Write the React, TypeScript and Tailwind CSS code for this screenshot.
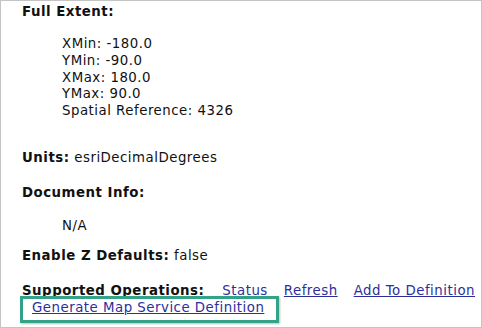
export default function App() {
  const lines = ["XMin: -180.0", "YMin: -90.0", "XMax: 180.0", "YMax: 90.0", "Spatial Reference: 4326"]

  return (
    <div
      className="relative w-[482px] h-[328px] overflow-hidden bg-white border border-[#c4c4c4] text-[#111] text-[13.33px] leading-[16.75px] tracking-[0.5px] pl-[21px] pt-[3px]"
      style={{ fontFamily: '"DejaVu Sans", Verdana, sans-serif' }}
    >
      <p className="font-bold">Full Extent:</p>
      <div className="mt-[15.25px] pl-[40px]">
        {lines.map((l) => (
          <p key={l}>{l}</p>
        ))}
      </div>

      <p className="mt-[30.25px]">
        <b>Units:</b> esriDecimalDegrees
      </p>

      <p className="mt-[18.25px] font-bold">Document Info:</p>
      <p className="mt-[16.25px] pl-[40px]">N/A</p>

      <p className="mt-[13.25px]">
        <b>Enable Z Defaults:</b> false
      </p>

      <div className="mt-[18.25px]">
        <p className="flex">
          <b>Supported Operations:</b>
          <a href="#" className="ml-[18px] text-[#2b2f9c] underline">Status</a>
          <a href="#" className="ml-[16px] text-[#2b2f9c] underline">Refresh</a>
          <a href="#" className="ml-[16px] text-[#2b2f9c] underline">Add To Definition</a>
        </p>
        <p className="pl-[10px]">
          <a href="#" className="text-[#2b2f9c] underline">Generate Map Service Definition</a>
        </p>
      </div>

      {/* highlight box drawn over the page */}
      <div className="absolute left-[19px] top-[295px] w-[259px] h-[27px] border-[3px] border-[#34a287] shadow-[1px_1px_2px_rgba(0,0,0,0.25)]" />
    </div>
  )
}
